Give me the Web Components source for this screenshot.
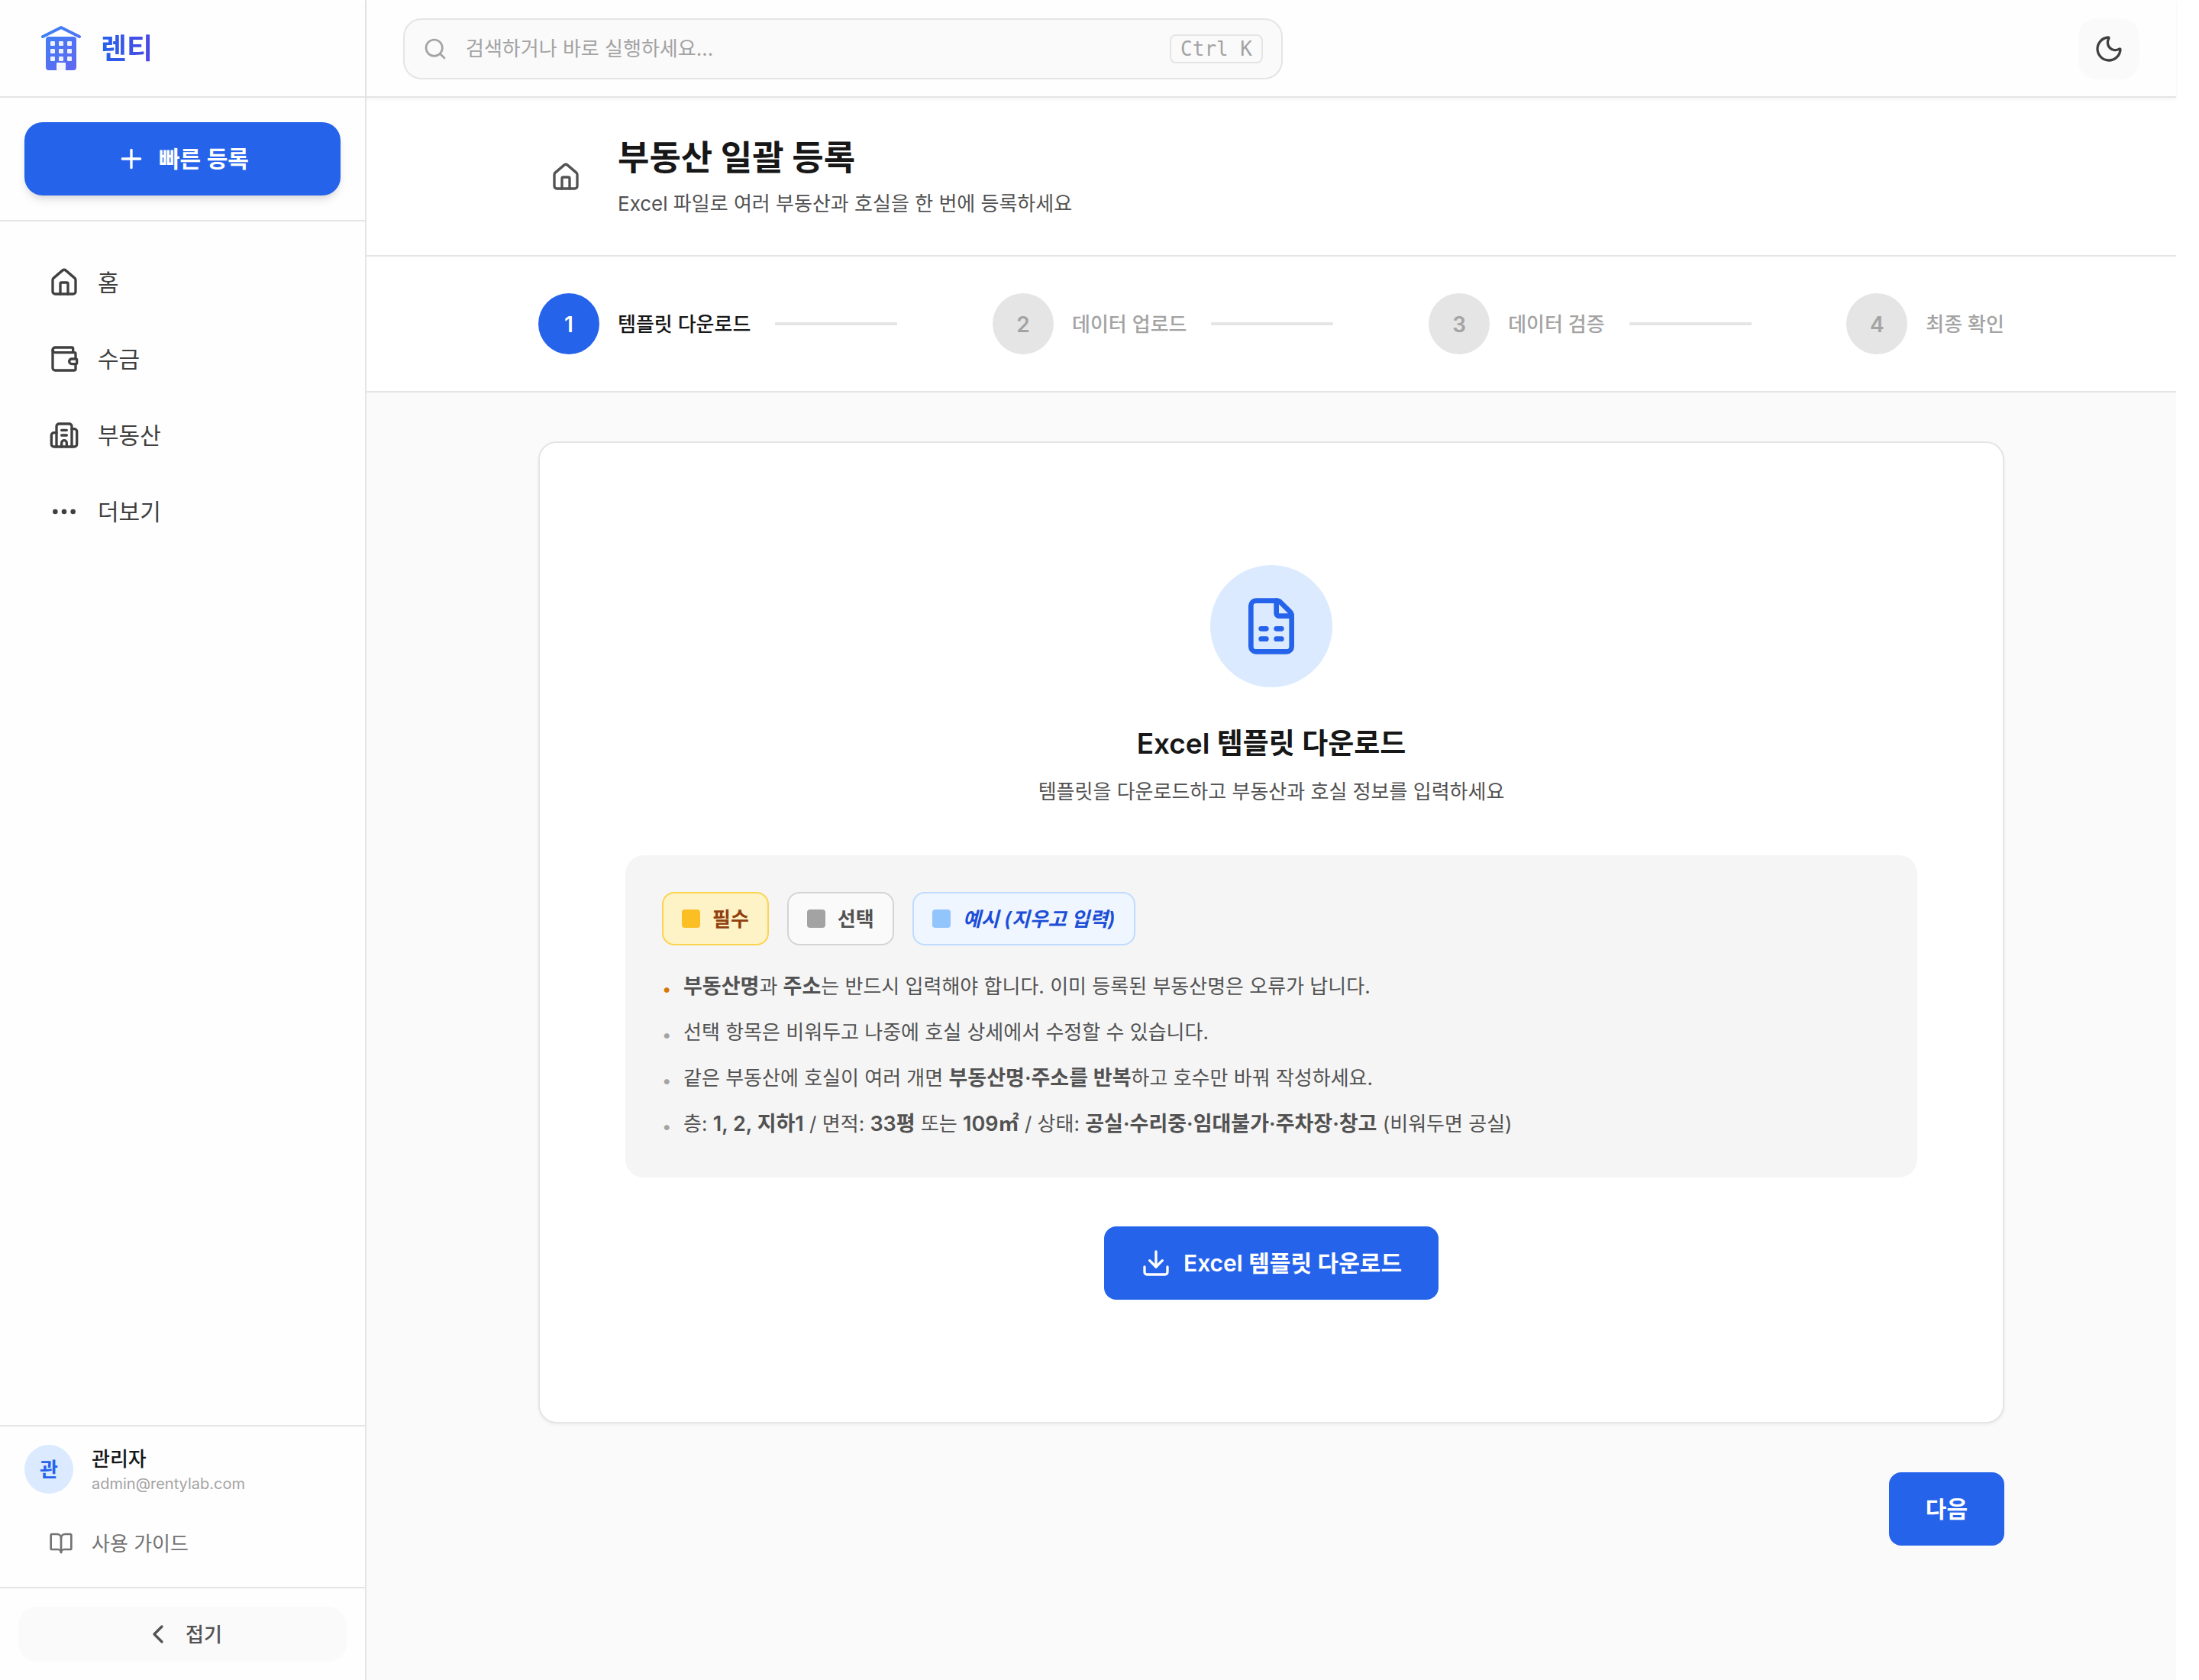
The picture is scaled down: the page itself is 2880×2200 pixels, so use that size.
<!DOCTYPE html>
<html lang="ko">
<head>
<meta charset="utf-8">
<meta name="viewport" content="width=device-width, initial-scale=1">
<title>부동산 일괄 등록</title>
<style>
  :root {
    --blue: #2563eb;
    --blue-soft: #dbeafe;
    --line: #e5e5e5;
    --ink: #171717;
    --ink-2: #404040;
    --ink-3: #525252;
    --ink-4: #737373;
    --mute: #a3a3a3;
    --surface: #fefefe;
    --ground: #fafafa;
    --fs-xs: 20px;
    --fs-sm: 26px;
    --fs-strong: 27px;
    --fs-md: 30px;
    --fs-lg: 37px;
    --fs-xl: 45px;
  }
  body {
    margin: 0;
    background: #fff;
    color: var(--ink);
    font-family: Inter, "Noto Sans CJK KR", sans-serif;
    font-size: var(--fs-sm);
    line-height: 42px;
    -webkit-font-smoothing: antialiased;
  }
</style>
</head>
<body>
<app-shell>
  <app-sidebar slot="sidebar">
    <nav-item icon="home">홈</nav-item>
    <nav-item icon="wallet">수금</nav-item>
    <nav-item icon="building">부동산</nav-item>
    <nav-item icon="more">더보기</nav-item>
  </app-sidebar>
  <top-bar slot="top"></top-bar>
  <page-header>
    <span slot="title">부동산 일괄 등록</span>
    <span slot="subtitle">Excel 파일로 여러 부동산과 호실을 한 번에 등록하세요</span>
  </page-header>
  <step-bar>
    <step-item number="1" active>템플릿 다운로드</step-item>
    <step-item number="2">데이터 업로드</step-item>
    <step-item number="3">데이터 검증</step-item>
    <step-item number="4" last>최종 확인</step-item>
  </step-bar>
  <template-step></template-step>
</app-shell>

<script>
const ICONS = {
  home: '<path d="M15 21v-8a1 1 0 0 0-1-1h-4a1 1 0 0 0-1 1v8"/><path d="M3 10a2 2 0 0 1 .709-1.528l7-6a2 2 0 0 1 2.582 0l7 6A2 2 0 0 1 21 10v9a2 2 0 0 1-2 2H5a2 2 0 0 1-2-2z"/>',
  wallet: '<path d="M19 7V4a1 1 0 0 0-1-1H5a2 2 0 0 0 0 4h15a1 1 0 0 1 1 1v4h-3a2 2 0 0 0 0 4h3a1 1 0 0 0 1-1v-2a1 1 0 0 0-1-1"/><path d="M3 5v14a2 2 0 0 0 2 2h15a1 1 0 0 0 1-1v-4"/>',
  building: '<path d="M10 12h4"/><path d="M10 8h4"/><path d="M14 21v-3a2 2 0 0 0-4 0v3"/><path d="M6 10H4a2 2 0 0 0-2 2v7a2 2 0 0 0 2 2h16a2 2 0 0 0 2-2V9a2 2 0 0 0-2-2h-2"/><path d="M6 21V5a2 2 0 0 1 2-2h8a2 2 0 0 1 2 2v16"/>',
  more: '<circle cx="12" cy="12" r="1"/><circle cx="19" cy="12" r="1"/><circle cx="5" cy="12" r="1"/>',
  plus: '<path d="M5 12h14"/><path d="M12 5v14"/>',
  search: '<circle cx="11" cy="11" r="8"/><path d="m21 21-4.34-4.34"/>',
  moon: '<path d="M20.985 12.486a9 9 0 1 1-9.473-9.472c.405-.022.617.46.402.803a6 6 0 0 0 8.268 8.268c.344-.215.825-.004.803.401"/>',
  book: '<path d="M12 7v14"/><path d="M3 18a1 1 0 0 1-1-1V4a1 1 0 0 1 1-1h5a4 4 0 0 1 4 4 4 4 0 0 1 4-4h5a1 1 0 0 1 1 1v13a1 1 0 0 1-1 1h-6a3 3 0 0 0-3 3 3 3 0 0 0-3-3z"/>',
  back: '<path d="m15 18-6-6 6-6"/>',
  sheet: '<path d="M6 22a2 2 0 0 1-2-2V4a2 2 0 0 1 2-2h8a2.4 2.4 0 0 1 1.704.706l3.588 3.588A2.4 2.4 0 0 1 20 8v12a2 2 0 0 1-2 2z"/><path d="M14 2v5a1 1 0 0 0 1 1h5"/><path d="M8 13h2"/><path d="M14 13h2"/><path d="M8 17h2"/><path d="M14 17h2"/>',
  download: '<path d="M12 15V3"/><path d="M21 15v4a2 2 0 0 1-2 2H5a2 2 0 0 1-2-2v-4"/><path d="m7 10 5 5 5-5"/>'
};

const RESET = `
  *, *::before, *::after { box-sizing: border-box; }
  :host { box-sizing: border-box; }
  h1, h2, p, ul { margin: 0; padding: 0; }
  ul { list-style: none; }
  button, input { font: inherit; color: inherit; margin: 0; border: 0; background: none; }
  button { cursor: pointer; }
  a { color: inherit; text-decoration: none; }
  .label { padding-top: 2px; }
`;

class Base extends HTMLElement {
  connectedCallback() {
    if (this.shadowRoot) return;
    this.attachShadow({ mode: 'open' }).innerHTML =
      `<style>${RESET}${this.css()}</style>${this.html()}`;
  }
  css() { return ':host { display: block; }'; }
  html() { return '<slot></slot>'; }
}

customElements.define('ui-icon', class extends Base {
  css() { return `
    :host { display: block; flex: none; width: var(--icon, 40px); height: var(--icon, 40px); }
    svg { display: block; width: 100%; height: 100%; }`; }
  html() { return `<svg viewBox="0 0 24 24" fill="none" stroke="currentColor" stroke-width="2" stroke-linecap="round" stroke-linejoin="round" aria-hidden="true">${ICONS[this.getAttribute('name')]}</svg>`; }
});

customElements.define('ui-button', class extends Base {
  css() { return `
    :host { display: block; }
    button {
      display: flex; align-items: center; justify-content: center; gap: 16px;
      width: 100%; height: 96px; padding: 0 48px; border-radius: 16px;
      background: var(--blue); color: #fff;
      font-size: var(--fs-md); font-weight: 600; white-space: nowrap;
    }
    :host([raised]) button {
      border-radius: 24px;
      box-shadow: 0 8px 12px -2px rgba(0,0,0,.1), 0 4px 8px -4px rgba(0,0,0,.1);
    }`; }
  html() {
    const icon = this.getAttribute('icon');
    return `<button type="button">${icon ? `<ui-icon name="${icon}"></ui-icon>` : ''}<slot></slot></button>`;
  }
});

customElements.define('app-shell', class extends Base {
  css() { return `
    :host { display: flex; min-height: 100vh; padding-right: 30px; }
    .side { display: flex; flex: none; width: 480px; }
    .body { display: flex; flex-direction: column; flex: 1; min-width: 0; background: var(--ground); }`; }
  html() { return `
    <div class="side"><slot name="sidebar"></slot></div>
    <div class="body"><slot name="top"></slot><main><slot></slot></main></div>`; }
});

customElements.define('brand-logo', class extends Base {
  css() { return `
    :host { display: flex; align-items: center; gap: 20px; }
    svg { display: block; width: 64px; height: 64px; }
    span {
      font-size: var(--fs-lg); font-weight: 700; line-height: 56px;
      background: linear-gradient(90deg, #2563eb, #4f46e5);
      -webkit-background-clip: text; background-clip: text; color: transparent;
    }`; }
  html() { return `
    <svg viewBox="0 0 64 64" aria-hidden="true">
      <defs><linearGradient id="g" gradientUnits="userSpaceOnUse" x1="8" y1="4" x2="56" y2="60"><stop offset="0" stop-color="#3b82f6"/><stop offset="1" stop-color="#6366f1"/></linearGradient></defs>
      <path d="M8 16 32 4 56 16" fill="none" stroke="url(#g)" stroke-width="4" stroke-linecap="round" stroke-linejoin="round"/>
      <rect x="12" y="16" width="40" height="44" rx="4" fill="url(#g)"/>
      <g fill="#fff" fill-opacity=".9">
        <rect x="18" y="22" width="6" height="6" rx="1"/><rect x="29" y="22" width="6" height="6" rx="1"/><rect x="40" y="22" width="6" height="6" rx="1"/>
        <rect x="18" y="32" width="6" height="6" rx="1"/><rect x="29" y="32" width="6" height="6" rx="1"/><rect x="40" y="32" width="6" height="6" rx="1"/>
        <rect x="18" y="42" width="6" height="6" rx="1"/><rect x="29" y="42" width="6" height="6" rx="1"/><rect x="40" y="42" width="6" height="6" rx="1"/>
      </g>
      <rect x="26" y="50" width="12" height="10" rx="1" fill="#fff" fill-opacity=".95"/>
    </svg>
    <span>렌티</span>`; }
});

customElements.define('nav-item', class extends Base {
  css() { return `
    :host { display: block; }
    a {
      display: flex; align-items: center; gap: 24px; height: 96px; padding: 0 32px;
      color: var(--ink-2); font-size: var(--fs-md); font-weight: 400;
    }`; }
  html() { return `<a href="#"><ui-icon name="${this.getAttribute('icon')}"></ui-icon><span><slot></slot></span></a>`; }
});

customElements.define('app-sidebar', class extends Base {
  css() { return `
    :host { display: flex; flex-direction: column; flex: 1; background: var(--surface); border-right: 2px solid var(--line); }
    .brand { display: flex; align-items: center; height: 128px; padding: 2px 48px 0; border-bottom: 2px solid var(--line); }
    .quick { padding: 32px; border-bottom: 2px solid var(--line); }
    nav { display: flex; flex-direction: column; gap: 4px; flex: 1; padding: 32px; }
    .account { padding: 24px 32px; border-top: 2px solid var(--line); }
    .user { display: flex; gap: 24px; }
    .avatar {
      display: grid; place-items: center; width: 64px; height: 64px; border-radius: 50%;
      background: var(--blue-soft); color: var(--blue); font-weight: 600;
    }
    .name { line-height: 38px; font-weight: 500; }
    .mail { line-height: 26px; font-size: var(--fs-xs); color: var(--mute); }
    .guide {
      display: flex; align-items: center; gap: 24px; height: 66px; margin-top: 32px; padding: 0 32px;
      color: var(--ink-4); --icon: 32px;
    }
    .fold { padding: 24px; border-top: 2px solid var(--line); }
    .fold button {
      display: flex; align-items: center; justify-content: center; gap: 16px;
      width: 100%; height: 72px; border-radius: 24px; background: var(--ground);
      color: var(--ink-3); font-weight: 500;
    }`; }
  html() { return `
    <div class="brand"><brand-logo></brand-logo></div>
    <div class="quick"><ui-button icon="plus" raised>빠른 등록</ui-button></div>
    <nav><slot></slot></nav>
    <div class="account">
      <div class="user">
        <div class="avatar"><span class="label">관</span></div>
        <div><div class="name">관리자</div><div class="mail">admin@rentylab.com</div></div>
      </div>
      <a class="guide" href="#"><ui-icon name="book"></ui-icon><span class="label">사용 가이드</span></a>
    </div>
    <div class="fold"><button type="button"><ui-icon name="back"></ui-icon><span class="label">접기</span></button></div>`; }
});

customElements.define('top-bar', class extends Base {
  css() { return `
    :host {
      display: flex; align-items: center; justify-content: space-between; height: 128px; padding: 2px 48px 0;
      background: var(--surface); border-bottom: 2px solid var(--line);
      box-shadow: 0 2px 4px rgba(0,0,0,.05); position: relative; z-index: 1;
    }
    .search {
      display: flex; align-items: center; gap: 24px; flex: 0 1 1152px; height: 80px; padding: 0 24px;
      border: 2px solid var(--line); border-radius: 24px; background: var(--ground);
      color: var(--mute); --icon: 32px;
    }
    input { flex: 1; min-width: 0; height: 42px; padding: 0; outline: 0; }
    input::placeholder { color: var(--mute); opacity: 1; }
    kbd {
      height: 38px; padding: 0 12px; border: 2px solid var(--line); border-radius: 8px;
      font: 26px/34px "DejaVu Sans Mono", monospace;
    }
    .theme {
      display: grid; place-items: center; width: 80px; height: 80px; padding: 0;
      border-radius: 24px; background: var(--ground); color: var(--ink-2);
    }`; }
  html() { return `
    <label class="search">
      <ui-icon name="search"></ui-icon>
      <input type="text" placeholder="검색하거나 바로 실행하세요..." aria-label="검색">
      <kbd>Ctrl K</kbd>
    </label>
    <button class="theme" type="button" aria-label="다크 모드"><ui-icon name="moon"></ui-icon></button>`; }
});

customElements.define('page-header', class extends Base {
  css() { return `
    :host { display: block; padding: 48px 48px 46px; background: #fff; border-bottom: 2px solid var(--line); }
    .in { display: flex; align-items: center; gap: 32px; max-width: 1920px; margin: 0 auto; }
    button { padding: 16px; color: var(--ink-3); }
    h1 { font-size: var(--fs-xl); line-height: 62px; font-weight: 700; }
    p { margin-top: 8px; color: var(--ink-3); }`; }
  html() { return `
    <div class="in">
      <button type="button" aria-label="홈으로"><ui-icon name="home"></ui-icon></button>
      <div><h1><slot name="title"></slot></h1><p><slot name="subtitle"></slot></p></div>
    </div>`; }
});

customElements.define('step-bar', class extends Base {
  css() { return `
    :host { display: block; padding: 48px; background: #fff; border-bottom: 2px solid var(--line); }
    .in { display: flex; align-items: center; justify-content: space-between; max-width: 1920px; margin: 0 auto; }`; }
  html() { return '<div class="in"><slot></slot></div>'; }
});

customElements.define('step-item', class extends Base {
  css() { return `
    :host { display: flex; align-items: center; color: var(--mute); font-weight: 500; }
    .dot {
      display: grid; place-items: center; width: 80px; height: 80px; margin-right: 24px;
      border-radius: 50%; background: var(--line); font-size: 28px; font-weight: 600;
    }
    .bar { width: 160px; height: 4px; margin-left: 32px; background: var(--line); }
    :host([active]) { color: var(--ink); }
    :host([active]) .dot { background: var(--blue); color: #fff; }
    :host([last]) .bar { display: none; }`; }
  html() { return `<span class="dot"><span class="label">${this.getAttribute('number')}</span></span><span class="label"><slot></slot></span><span class="bar"></span>`; }
});

customElements.define('legend-chip', class extends Base {
  css() { return `
    :host {
      display: flex; align-items: center; gap: 16px; height: 70px; padding: 0 24px; border: 2px solid; border-radius: 16px;
      font-weight: 600;
    }
    i { width: 24px; height: 24px; border-radius: 4px; }
    :host([tone="required"]) { background: #fef3c7; border-color: #fcd34d; color: #92400e; }
    :host([tone="required"]) i { background: #fbbf24; }
    :host([tone="optional"]) { background: #fafafa; border-color: #d4d4d4; color: #525252; }
    :host([tone="optional"]) i { background: #a3a3a3; }
    :host([tone="example"]) { background: #eff6ff; border-color: #bfdbfe; color: #1d4ed8; font-style: italic; }
    :host([tone="example"]) i { background: #93c5fd; }`; }
  html() { return '<i></i><span class="label"><slot></slot></span>'; }
});

customElements.define('template-step', class extends Base {
  css() { return `
    :host { display: block; padding: 64px 48px; }
    .in { max-width: 1920px; margin: 0 auto; }
    .card {
      display: flex; flex-direction: column; align-items: center; padding: 160px 112px;
      background: #fff; border: 2px solid var(--line); border-radius: 24px;
      box-shadow: 0 2px 4px rgba(0,0,0,.05);
    }
    .badge {
      display: grid; place-items: center; width: 160px; height: 160px; border-radius: 50%;
      background: var(--blue-soft); color: var(--blue); --icon: 80px;
    }
    h2 { margin-top: 48px; font-size: var(--fs-lg); line-height: 52px; font-weight: 600; }
    .lead { margin-top: 16px; color: var(--ink-3); }
    .guide { align-self: stretch; margin: 62px 0 64px; padding: 48px; border-radius: 24px; background: #f5f5f5; color: var(--ink-3); }
    .chips { display: flex; gap: 24px; }
    ul { display: flex; flex-direction: column; gap: 16px; margin-top: 32px; }
    li { display: flex; gap: 16px; height: 44px; line-height: 44px; }
    li > b { width: 12px; font-size: 22px; line-height: 50px; font-weight: 400; text-align: center; color: var(--mute); }
    li:first-child > b { color: #d97706; }
    strong { font-size: var(--fs-strong); font-weight: 600; }
    .next { display: flex; justify-content: flex-end; margin-top: 64px; }`; }
  html() { return `
    <div class="in">
      <section class="card">
        <div class="badge"><ui-icon name="sheet"></ui-icon></div>
        <h2>Excel 템플릿 다운로드</h2>
        <p class="lead">템플릿을 다운로드하고 부동산과 호실 정보를 입력하세요</p>
        <div class="guide">
          <div class="chips">
            <legend-chip tone="required">필수</legend-chip>
            <legend-chip tone="optional">선택</legend-chip>
            <legend-chip tone="example">예시 (지우고 입력)</legend-chip>
          </div>
          <ul>
            <li><b>•</b><span><strong>부동산명</strong>과 <strong>주소</strong>는 반드시 입력해야 합니다. 이미 등록된 부동산명은 오류가 납니다.</span></li>
            <li><b>•</b><span>선택 항목은 비워두고 나중에 호실 상세에서 수정할 수 있습니다.</span></li>
            <li><b>•</b><span>같은 부동산에 호실이 여러 개면 <strong>부동산명·주소를 반복</strong>하고 호수만 바꿔 작성하세요.</span></li>
            <li><b>•</b><span>층: <strong>1, 2, 지하1</strong> / 면적: <strong>33평</strong> 또는 <strong>109㎡</strong> / 상태: <strong>공실·수리중·임대불가·주차장·창고</strong> (비워두면 공실)</span></li>
          </ul>
        </div>
        <ui-button icon="download">Excel 템플릿 다운로드</ui-button>
      </section>
      <div class="next"><ui-button>다음</ui-button></div>
    </div>`; }
});
</script>
</body>
</html>
